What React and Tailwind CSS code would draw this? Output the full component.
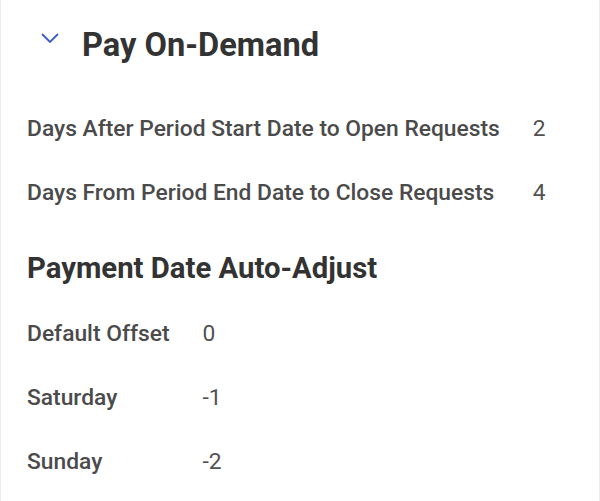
const requestWindow = [
  { label: "Days After Period Start Date to Open Requests", value: "2" },
  { label: "Days From Period End Date to Close Requests", value: "4" },
];

const autoAdjust = [
  { label: "Default Offset", value: "0" },
  { label: "Saturday", value: "-1" },
  { label: "Sunday", value: "-2" },
];

function FieldGrid({ rows }) {
  return (
    <div className="grid grid-cols-[auto_auto] justify-start gap-x-[33px]">
      {rows.map((row) => (
        <div key={row.label} className="contents">
          <div className="h-16 flex items-center font-medium text-[#4b4b4b]">{row.label}</div>
          <div className="h-16 flex items-center text-[#525252]">{row.value}</div>
        </div>
      ))}
    </div>
  );
}

export default function App() {
  return (
    <div
      className="w-[600px] h-[501px] bg-white border-x border-[#ececec] overflow-hidden text-[22.8px]"
      style={{ fontFamily: "Roboto, 'Noto Sans', sans-serif" }}
    >
      <div className="flex items-center h-[90px] pl-[40px]">
        <svg width="18" height="10" viewBox="0 0 18 10" className="-mt-[14px]" fill="none">
          <polyline points="1,1 9,9 17,1" stroke="#3a5cc6" strokeWidth="1.8" />
        </svg>
        <h1 className="ml-[23px] text-[32.6px] font-bold text-[#333333]">Pay On-Demand</h1>
      </div>

      <div className="pl-[26px] pt-[7px]">
        <FieldGrid rows={requestWindow} />

        <h2 className="mt-[22px] h-[44px] flex items-center text-[29.3px] font-bold text-[#333333]">
          Payment Date Auto-Adjust
        </h2>

        <div className="mt-[11px]">
          <FieldGrid rows={autoAdjust} />
        </div>
      </div>
    </div>
  );
}
